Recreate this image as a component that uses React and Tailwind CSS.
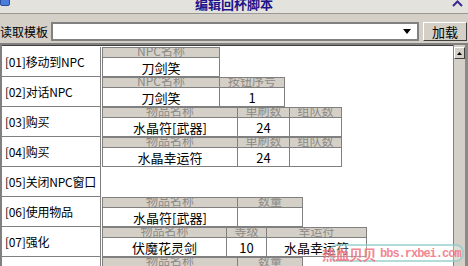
import React from "react";

const rows = [
  { label: "[01]移动到NPC", cells: [{ w: "w-[118px]", h: "NPC名称", v: "刀剑笑" }] },
  { label: "[02]对话NPC", cells: [{ w: "w-[118px]", h: "NPC名称", v: "刀剑笑" }, { w: "w-[65px]", h: "按钮序号", v: "1" }] },
  { label: "[03]购买", cells: [{ w: "w-[136px]", h: "物品名称", v: "水晶符[武器]" }, { w: "w-[52px]", h: "单刷数", v: "24" }, { w: "w-[52px]", h: "组队数", v: "" }] },
  { label: "[04]购买", cells: [{ w: "w-[136px]", h: "物品名称", v: "水晶幸运符" }, { w: "w-[52px]", h: "单刷数", v: "24" }, { w: "w-[52px]", h: "组队数", v: "" }] },
  { label: "[05]关闭NPC窗口", cells: [] },
  { label: "[06]使用物品", cells: [{ w: "w-[136px]", h: "物品名称", v: "水晶符[武器]" }, { w: "w-[65px]", h: "数量", v: "" }] },
  { label: "[07]强化", cells: [{ w: "w-[125px]", h: "物品名称", v: "伏魔花灵剑" }, { w: "w-[40px]", h: "等级", v: "10" }, { w: "w-[100px]", h: "幸运符", v: "水晶幸运符" }] },
  { label: "[08]使用物品", cells: [{ w: "w-[136px]", h: "物品名称", v: "" }, { w: "w-[65px]", h: "数量", v: "" }] },
];

function Cell({ c, first }) {
  return (
    <div className={`flex flex-col shrink-0 ${c.w} ${first ? "border-l" : ""} border-r border-[#808080]`}>
      <div className="h-[11px] border-y border-[#808080] bg-[#d4d0c8] overflow-hidden flex items-end justify-center">
        <span className="text-[12px] leading-[12px] text-[#8c8a86] whitespace-nowrap">{c.h}</span>
      </div>
      <div className="h-[19px] border-b border-[#808080] bg-white flex items-center justify-center">
        <span className="text-[13px] leading-[15px] text-black whitespace-nowrap">{c.v}</span>
      </div>
    </div>
  );
}

export default function App() {
  return (
    <div className="w-[468px] h-[266px] overflow-hidden bg-[#d4d0c8] relative font-['Noto_Sans_CJK_SC',sans-serif]">
      {/* title bar */}
      <div className="h-[14px] bg-[#e4e2dc] border-b border-[#9a9894] relative flex justify-center overflow-hidden">
        <div className="absolute left-0 top-[-4px] w-[10px] h-[10px] rounded-[2px] bg-[#4a7ed8] border border-[#2a4e9a]" />
        <span className="-mt-[5px] text-[13px] leading-[17px] font-bold text-[#20148c] whitespace-nowrap">编辑回杯脚本</span>
        <svg className="absolute right-[5px] top-0" width="11" height="8" viewBox="0 0 11 8">
          <path d="M1 6 L5.5 1.5 L10 6" fill="none" stroke="#3a2a90" strokeWidth="2" />
        </svg>
      </div>
      {/* toolbar */}
      <div className="flex items-center h-[19px] mt-[8px]">
        <div className="w-[48px] shrink-0 text-[12px] leading-[14px] text-black whitespace-nowrap">读取模板</div>
        <div className="ml-[3px] w-[368px] h-[19px] bg-white border-2 border-[#808080] flex items-center justify-end pr-[6px]">
          <svg width="8" height="5" viewBox="0 0 8 5"><path d="M0 0 H8 L4 5 Z" fill="#000" /></svg>
        </div>
        <div className="ml-[4px] w-[44px] h-[19px] border-t border-l border-white border-r border-b border-r-[#404040] border-b-[#404040] bg-[#d4d0c8] flex items-center justify-center text-[13px] leading-[15px] text-black">
          加载
        </div>
      </div>
      {/* panel */}
      <div className="mt-[2px] flex h-[223px] border-t-2 border-l-2 border-[#808080]">
        <div className="flex-1 bg-white border-t border-[#404040] pt-[1px] overflow-hidden">
          {rows.map((r, i) => (
            <div key={i} className="flex h-[30px]">
              <div className="w-[99px] shrink-0 border-r border-b border-[#808080] flex items-center pl-[3px] text-[12px] leading-[14px] tracking-[-0.2px] text-black whitespace-nowrap">
                {r.label}
              </div>
              <div className="flex ml-[1px]">
                {r.cells.map((c, j) => (
                  <Cell key={j} c={c} first={j === 0} />
                ))}
              </div>
            </div>
          ))}
        </div>
        {/* scrollbar */}
        <div className="w-[12px] shrink-0 bg-[#d4d0c8] border-l border-[#808080] flex flex-col pt-[2px]">
          <div className="h-[12px] border-t border-l border-white border-r border-b border-r-[#404040] border-b-[#404040] flex items-center justify-center">
            <svg width="5" height="3" viewBox="0 0 5 3"><path d="M0 3 H5 L2.5 0 Z" fill="#000" /></svg>
          </div>
        </div>
        <div className="w-[3px] shrink-0 bg-[#8c8a86]" />
      </div>
      {/* watermark */}
      <div className="absolute left-[329px] top-[244px] w-[135px] h-[18px] rounded-[8px] border-2 border-[#7fc4c0]/60 bg-white/30" />
      <div className="absolute left-[322px] top-[245px] h-[17px] flex items-center whitespace-nowrap text-[#f07080]/85 font-bold">
        <span className="text-[14px] leading-[16px] tracking-[-0.5px]">热血贝贝</span>
        <span className="ml-[4px] text-[12px] leading-[16px] tracking-[-1px] font-['Liberation_Mono',monospace]">bbs.rxbei.com</span>
      </div>
    </div>
  );
}
